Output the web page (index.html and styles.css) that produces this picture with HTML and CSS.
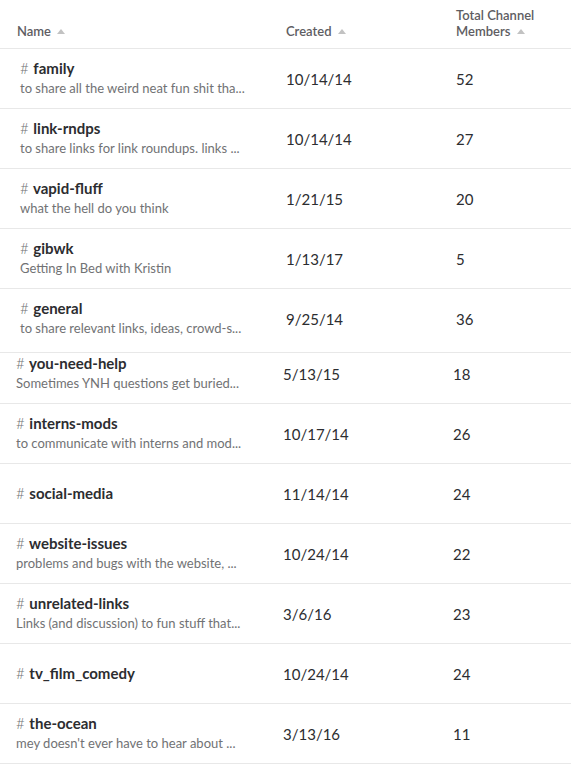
FILE: index.html
```html
<!DOCTYPE html>
<html>
<head>
<meta charset="utf-8">
<link rel="stylesheet" href="styles.css">
</head>
<body>
<div class="table">
  <div class="head">
    <div class="hcell">Name <span class="tri"></span></div>
    <div class="hcell">Created <span class="tri"></span></div>
    <div class="hcell">Total Channel<br>Members <span class="tri"></span></div>
  </div>
  <div class="seg seg1">
    <div class="row">
      <div class="name"><div class="title"><span class="hash">#</span> family</div><div class="desc">to share all the weird neat fun shit tha...</div></div>
      <div class="num">10/14/14</div><div class="num">52</div>
    </div>
    <div class="row">
      <div class="name"><div class="title"><span class="hash">#</span> link-rndps</div><div class="desc">to share links for link roundups. links ...</div></div>
      <div class="num">10/14/14</div><div class="num">27</div>
    </div>
    <div class="row">
      <div class="name"><div class="title"><span class="hash">#</span> vapid-fluff</div><div class="desc">what the hell do you think</div></div>
      <div class="num">1/21/15</div><div class="num">20</div>
    </div>
    <div class="row">
      <div class="name"><div class="title"><span class="hash">#</span> gibwk</div><div class="desc">Getting In Bed with Kristin</div></div>
      <div class="num">1/13/17</div><div class="num">5</div>
    </div>
    <div class="row last">
      <div class="name"><div class="title"><span class="hash">#</span> general</div><div class="desc">to share relevant links, ideas, crowd-s...</div></div>
      <div class="num">9/25/14</div><div class="num">36</div>
    </div>
  </div>
  <div class="seg2">
    <div class="seg2-inner">
      <div class="row">
        <div class="name"><div class="title"><span class="hash">#</span> you-need-help</div><div class="desc">Sometimes YNH questions get buried...</div></div>
        <div class="num">5/13/15</div><div class="num">18</div>
      </div>
      <div class="row">
        <div class="name"><div class="title"><span class="hash">#</span> interns-mods</div><div class="desc">to communicate with interns and mod...</div></div>
        <div class="num">10/17/14</div><div class="num">26</div>
      </div>
      <div class="row">
        <div class="name"><div class="title"><span class="hash">#</span> social-media</div></div>
        <div class="num">11/14/14</div><div class="num">24</div>
      </div>
      <div class="row">
        <div class="name"><div class="title"><span class="hash">#</span> website-issues</div><div class="desc">problems and bugs with the website, ...</div></div>
        <div class="num">10/24/14</div><div class="num">22</div>
      </div>
      <div class="row">
        <div class="name"><div class="title"><span class="hash">#</span> unrelated-links</div><div class="desc">Links (and discussion) to fun stuff that...</div></div>
        <div class="num">3/6/16</div><div class="num">23</div>
      </div>
      <div class="row">
        <div class="name"><div class="title"><span class="hash">#</span> tv_film_comedy</div></div>
        <div class="num">10/24/14</div><div class="num">24</div>
      </div>
      <div class="row">
        <div class="name"><div class="title"><span class="hash">#</span> the-ocean</div><div class="desc">mey doesn't ever have to hear about ...</div></div>
        <div class="num">3/13/16</div><div class="num">11</div>
      </div>
    </div>
  </div>
</div>
</body>
</html>
```
FILE: styles.css
```css
* { box-sizing: border-box; }
html, body { margin: 0; padding: 0; background: #fff; }
body {
  font-family: Lato, "Liberation Sans", sans-serif;
  color: #2c2d30;
  width: 571px;
  height: 766px;
  overflow: hidden;
}
.head {
  display: grid;
  grid-template-columns: 269px 170px 1fr;
  padding-left: 17px;
  height: 49px;
  align-items: end;
  padding-bottom: 9px;
  border-bottom: 1px solid #e8e8e8;
}
.hcell {
  font-size: 13px;
  line-height: 16px;
  font-weight: 600;
  color: #5e5d62;
}
.tri {
  display: inline-block;
  width: 0;
  height: 0;
  margin-left: 3px;
  vertical-align: 2px;
  border-left: 4px solid transparent;
  border-right: 4px solid transparent;
  border-bottom: 5px solid #c2c2c2;
}
.row {
  display: grid;
  grid-template-columns: 266px 170px 1fr;
  padding-left: 20px;
  height: 60px;
  align-items: center;
  border-bottom: 1px solid #e8e8e8;
}
.row.last { height: 64px; padding-bottom: 4px; }
.seg2 { overflow: hidden; height: 412px; }
.seg2-inner { margin-top: -9px; }
.seg2 .row {
  grid-template-columns: 267px 170px 1fr;
  padding-left: 16px;
}
.name { margin-top: -2px; }
.title {
  font-size: 15px;
  line-height: 20px;
  font-weight: 700;
  color: #2c2d30;
  white-space: nowrap;
}
.hash { font-weight: 300; color: #717274; margin-right: 1px; }
.desc {
  font-size: 13px;
  line-height: 20px;
  color: #717274;
  white-space: nowrap;
}
.num {
  font-size: 15px;
  color: #2c2d30;
}
```
